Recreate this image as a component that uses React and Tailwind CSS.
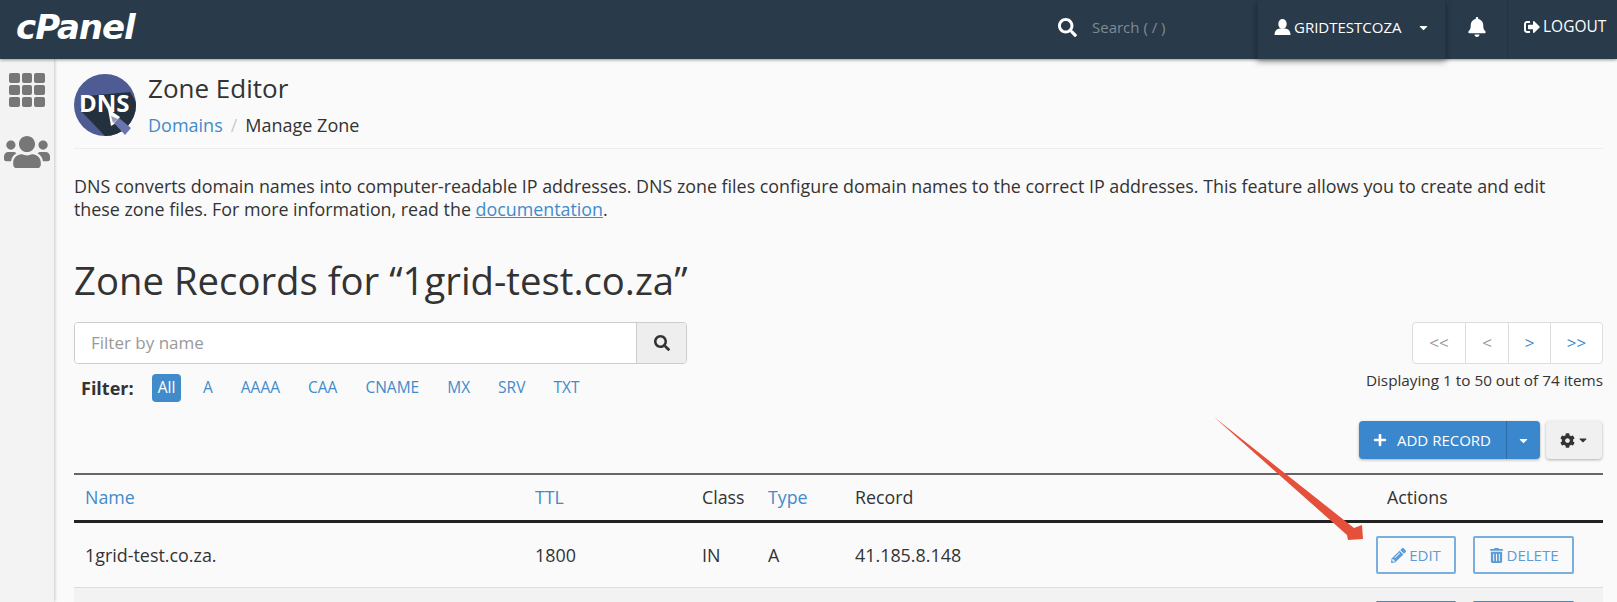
import React from 'react';
import { FaSearch, FaBell, FaSignOutAlt, FaUsers, FaPlus, FaCog, FaPencilAlt, FaTrashAlt, FaCaretDown } from 'react-icons/fa';

const filters = ['A', 'AAAA', 'CAA', 'CNAME', 'MX', 'SRV', 'TXT'];

// 3x3 app grid of the sidebar
const GridIcon = () => (
  <div className="grid grid-cols-3 gap-[2px] w-[36px]">
    {[0, 1, 2, 3, 4, 5, 6, 7, 8].map((i) => (
      <div key={i} className="h-[10px] rounded-[2px] bg-[#777]" />
    ))}
  </div>
);

const UserIcon = () => (
  <svg width="17" height="16" viewBox="0 0 17 16" fill="#fff">
    <ellipse cx="8.5" cy="5" rx="4.2" ry="5" />
    <path d="M0.5 16 C0.5 11.5 3 10 6 9.5 L11 9.5 C14 10 16.5 11.5 16.5 16 Z" />
  </svg>
);

const DnsLogo = () => (
  <svg width="62" height="62" viewBox="0 0 62 62">
    <defs>
      <clipPath id="dnsClip"><circle cx="31" cy="31" r="31" /></clipPath>
    </defs>
    <circle cx="31" cy="31" r="31" fill="#4f5b93" />
    <g clipPath="url(#dnsClip)">
      <path d="M6 36 L31 62 L62 62 L62 28 L56 18 L12 22 Z" fill="#23303d" />
    </g>
    <text x="5" y="38" fontSize="24" fontWeight="700" fill="#fff" fontFamily="'Open Sans', sans-serif">DNS</text>
    <path d="M34 35 L37 52 L42 49 L46 43 Z" fill="#fff" />
    <path d="M37 42 L39 49 L44 45 Z" fill="#9a9db5" />
    <path d="M40 49 L45 44 L57 54 L51 61 Z" fill="#6a75ad" />
  </svg>
);

const App = () => {
  return (
    <div className="relative w-[1617px] h-[602px] overflow-hidden bg-[#fafafa] text-[#333] font-['Open_Sans',sans-serif]">
      {/* Top bar */}
      <header className="relative z-10 h-[59px] bg-[#293a4a] flex items-stretch shadow-[0_1px_3px_rgba(0,0,0,0.4)]">
        <span className="self-center mb-[5px] pl-[16px] text-[34px] leading-none font-bold italic text-white tracking-[-1px] font-['DejaVu_Sans',sans-serif]">cPanel</span>
        <div className="ml-auto flex items-stretch">
          <div className="flex items-center pb-[5px] text-[15px] text-[#7f8a94] w-[199px]">
            <FaSearch className="text-white text-[19px] mr-[15px]" />
            Search ( / )
          </div>
          <div className="flex items-center pl-[16px] pb-[5px] w-[189px] text-white text-[15px] border-x border-[#25343f] shadow-[0_3px_6px_rgba(0,0,0,0.35)]">
            <UserIcon />
            <span className="ml-[3px]">GRIDTESTCOZA</span>
            <FaCaretDown className="ml-[15px] text-[13px]" />
          </div>
          <div className="flex items-center justify-center pb-[5px] w-[62px] border-r border-[#25343f] text-white">
            <FaBell className="text-[20px]" />
          </div>
          <div className="flex items-center gap-[3px] pb-[5px] w-[109px] pl-[16px] text-white text-[15.5px]">
            <FaSignOutAlt className="text-[16px]" />
            LOGOUT
          </div>
        </div>
      </header>

      <div className="flex">
        {/* Sidebar */}
        <aside className="w-[54px] h-[543px] shrink-0 bg-[#f3f3f3] shadow-[1px_0_3px_rgba(0,0,0,0.2)] flex flex-col items-center pt-[14px]">
          <GridIcon />
          <FaUsers className="mt-[22px] text-[#777] text-[46px]" />
        </aside>

        {/* Main */}
        <main className="flex-1 pl-[20px] pr-[14px]">
          <div className="flex gap-[12px] pt-[14px] pb-[12px] border-b border-[#eee]">
            <div className="pt-[1px]"><DnsLogo /></div>
            <div className="h-[63px]">
              <h1 className="text-[26px] leading-[30px]">Zone Editor</h1>
              <div className="mt-[11px] text-[18px] leading-[22px]">
                <span className="text-[#428bca]">Domains</span>
                <span className="text-[#ccc] mx-[8px]">/</span>
                <span>Manage Zone</span>
              </div>
            </div>
          </div>
          <p className="mt-[26px] pr-[25px] text-[17.85px] leading-[23px]">
            DNS converts domain names into computer-readable IP addresses. DNS zone files configure domain names to the correct IP addresses. This feature allows you to create and edit these zone files. For more information, read the <a className="text-[#428bca] underline">documentation</a>.
          </p>
          <h2 className="mt-[35px] text-[38.3px] leading-[48px]">Zone Records for “1grid-test.co.za”</h2>

          <div className="flex justify-between mt-[18px]">
            <div>
              <div className="flex w-[613px] h-[42px] border border-[#ccc] rounded-[4px] overflow-hidden">
                <div className="flex-1 bg-white flex items-center pl-[16px] text-[17px] text-[#999]">Filter by name</div>
                <div className="w-[50px] bg-[#eee] border-l border-[#ccc] flex items-center justify-center">
                  <FaSearch className="text-[#333] text-[16px]" />
                </div>
              </div>
              <div className="flex items-center mt-[10px] pl-[7px] text-[15.5px]">
                <span className="font-bold text-[18px] w-[71px]">Filter:</span>
                <span className="bg-[#428bca] text-white rounded-[4px] w-[29px] justify-center h-[28px] flex items-center mr-[22px]">All</span>
                <div className="flex gap-[28px] text-[#428bca]">
                  {filters.map((f) => (
                    <span key={f}>{f}</span>
                  ))}
                </div>
              </div>
            </div>
            <div className="flex flex-col items-end">
              <div className="flex h-[42px] bg-white border border-[#ddd] rounded-[4px] text-[17px] text-[#428bca]">
                <div className="flex items-center justify-center w-[52px] text-[#999]">&lt;&lt;</div>
                <div className="flex items-center justify-center w-[43px] text-[#999] border-l border-[#ddd]">&lt;</div>
                <div className="flex items-center justify-center w-[42px] border-l border-[#ddd]">&gt;</div>
                <div className="flex items-center justify-center w-[52px] border-l border-[#ddd]">&gt;&gt;</div>
              </div>
              <div className="mt-[6px] text-[15.3px] leading-[20px]">Displaying 1 to 50 out of 74 items</div>
            </div>
          </div>

          <div className="flex justify-end mt-[19px] pr-[1px]">
            <div className="flex h-[38px] rounded-[4px] bg-[#3a87cd] text-white text-[15px] shadow-[0_1px_3px_rgba(0,0,0,0.3)]">
              <div className="flex items-center w-[148px] pl-[14px] gap-[10px] border-r border-[#2e6da4]">
                <FaPlus className="text-[14px]" />
                ADD RECORD
              </div>
              <div className="flex items-center justify-center w-[33px]"><FaCaretDown className="text-[13px]" /></div>
            </div>
            <div className="ml-[6px] flex items-center justify-center gap-[2px] w-[56px] h-[38px] rounded-[4px] bg-[#f0f0f0] shadow-[0_1px_3px_rgba(0,0,0,0.3)]">
              <FaCog className="text-[15px]" />
              <FaCaretDown className="text-[12px]" />
            </div>
          </div>

          {/* Table */}
          <div className="mt-[14px] border-t-2 border-[#666]">
            <div className="flex items-center h-[48px] border-b-[3px] border-[#222] text-[17.8px]">
              <span className="w-[461px] pl-[11px] text-[#428bca]">Name</span>
              <span className="w-[167px] text-[#428bca]">TTL</span>
              <span className="w-[66px]">Class</span>
              <span className="w-[87px] text-[#428bca]">Type</span>
              <span className="w-[532px]">Record</span>
              <span>Actions</span>
            </div>
            <div className="flex items-center h-[65px] border-b border-[#ddd] text-[17.9px]">
              <span className="w-[461px] pl-[11px]">1grid-test.co.za.</span>
              <span className="w-[167px]">1800</span>
              <span className="w-[66px]">IN</span>
              <span className="w-[87px]">A</span>
              <span className="w-[521px]">41.185.8.148</span>
              <button className="flex items-center justify-center gap-[3px] w-[80px] h-[38px] border-2 border-[#7aaedd] rounded-[2px] text-[#5d9cd6] text-[15px]">
                <FaPencilAlt className="text-[15px]" />EDIT
              </button>
              <button className="ml-[17px] flex items-center justify-center gap-[3px] w-[101px] h-[38px] border-2 border-[#7aaedd] rounded-[2px] text-[#5d9cd6] text-[15px]">
                <FaTrashAlt className="text-[15px]" />DELETE
              </button>
            </div>
            <div className="flex h-[30px] bg-[#f2f2f2] pt-[13px] pl-[1302px]">
              <div className="w-[80px] h-[17px] border-t-2 border-x-2 border-[#428bca] rounded-t-[2px]" />
              <div className="ml-[17px] w-[101px] h-[17px] border-t-2 border-x-2 border-[#428bca] rounded-t-[2px]" />
            </div>
          </div>
        </main>
      </div>

      {/* Red arrow annotation */}
      <svg className="absolute left-0 top-0 pointer-events-none" width="1617" height="602">
        <path d="M1214 417 L1354 528 L1362 525 L1363 539 L1348 540 L1347 535 Z" fill="#e4503a" />
      </svg>
    </div>
  );
};

export default App;
